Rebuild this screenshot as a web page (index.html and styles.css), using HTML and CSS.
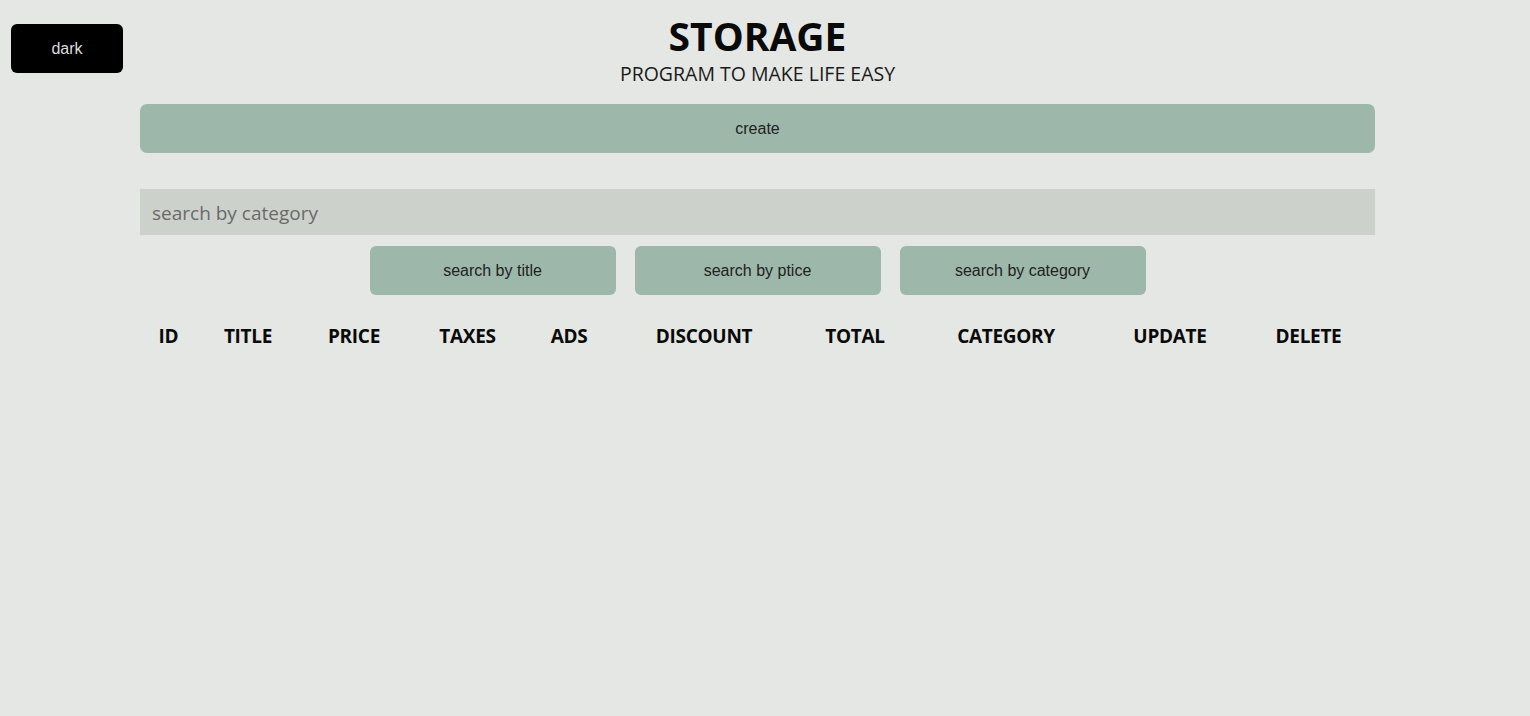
FILE: index.html
```html
<!DOCTYPE html>
<html>
<head>
<meta charset="utf-8">
<link rel="stylesheet" href="styles.css">
</head>
<body>
<div class="page">
  <button class="mode">dark</button>
  <div class="crud">
    <header class="head">
      <h1 class="title">STORAGE</h1>
      <p class="subtitle">PROGRAM TO MAKE LIFE EASY</p>
    </header>
    <button class="create">create</button>
    <input class="search" type="text" placeholder="search by category">
    <div class="search-btns">
      <button class="sbtn">search by title</button>
      <button class="sbtn">search by ptice</button>
      <button class="sbtn">search by category</button>
    </div>
    <div class="thead">
      <span>ID</span>
      <span>TITLE</span>
      <span>PRICE</span>
      <span>TAXES</span>
      <span>ADS</span>
      <span>DISCOUNT</span>
      <span>TOTAL</span>
      <span>CATEGORY</span>
      <span>UPDATE</span>
      <span>DELETE</span>
    </div>
  </div>
</div>
</body>
</html>
```

FILE: styles.css
```css
* { box-sizing: border-box; }
html, body { margin: 0; padding: 0; }
body {
  background: #e5e7e4;
  height: 716px;
  overflow: hidden;
  font-family: "Open Sans", "Noto Sans", sans-serif;
  color: #111;
}
.page {
  position: relative;
  width: 1515px;
  padding-top: 16px;
}
.mode {
  position: absolute;
  left: 11px;
  top: 24px;
  width: 112px;
  height: 49px;
  border: none;
  border-radius: 6px;
  background: #000;
  color: #ddd;
  font-family: "Liberation Sans", Arial, sans-serif;
  font-size: 16px;
  cursor: pointer;
}
.crud {
  width: 1235px;
  margin: 0 auto;
  display: flex;
  flex-direction: column;
}
.head { text-align: center; }
.title {
  margin: 0;
  font-size: 39px;
  font-weight: 700;
  line-height: 40px;
  color: #0a0a0a;
}
.subtitle {
  margin: 5px 0 0;
  font-size: 19.5px;
  line-height: 26px;
  color: #1a1a1a;
}
.create {
  margin-top: 17px;
  height: 49px;
  border: none;
  border-radius: 7px;
  background: #9db8ab;
  color: #222;
  font-family: "Liberation Sans", Arial, sans-serif;
  font-size: 16px;
}
.search {
  margin-top: 36px;
  height: 46px;
  border: none;
  outline: none;
  background: #cdd1cc;
  padding: 2px 12px 0;
  font-family: "Open Sans", sans-serif;
  font-size: 19px;
  color: #333;
}
.search::placeholder { color: #6a6a6a; }
.search-btns {
  margin-top: 11px;
  display: flex;
  justify-content: center;
  gap: 19px;
}
.sbtn {
  width: 246px;
  height: 49px;
  border: none;
  border-radius: 6px;
  background: #9db8ab;
  color: #222;
  font-family: "Liberation Sans", Arial, sans-serif;
  font-size: 16px;
}
.thead {
  margin-top: 26px;
  display: grid;
  grid-template-columns: 57px 102px 110px 117px 86px 184px 118px 184px 144px 133px;
  text-align: center;
  font-size: 19px;
  font-weight: 700;
  line-height: 30px;
  color: #0a0a0a;
  letter-spacing: -0.3px;
}
```
